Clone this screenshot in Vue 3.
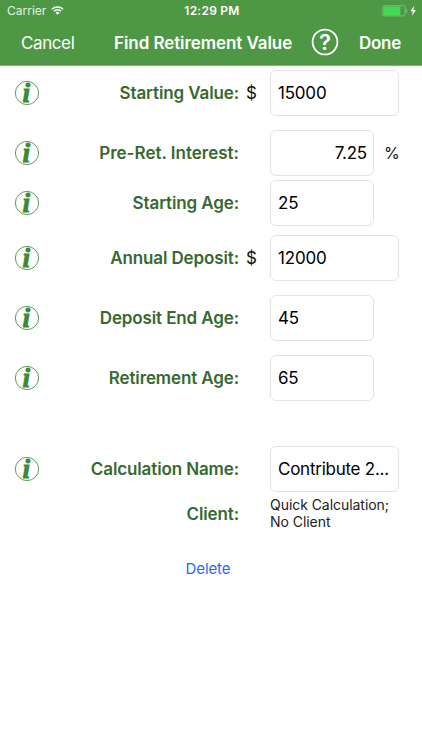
<template>
  <div class="screen">
    <header class="top-bar">
      <div class="status-bar">
        <div class="carrier">
          <span class="carrier-name">Carrier</span>
          <svg class="wifi" viewBox="0 0 13 9" width="13" height="9">
            <path d="M0.9 3.3a8 8 0 0 1 11.2 0" />
            <path d="M2.9 5.3a5.1 5.1 0 0 1 7.2 0" />
            <path class="solid" d="M6.5 8.8L4.4 6.7a3 3 0 0 1 4.2 0z" />
          </svg>
        </div>
        <span class="clock">12:29 PM</span>
        <svg class="battery" viewBox="0 0 35 12" width="35" height="12">
          <rect class="shell" x="0.9" y="0.7" width="22.2" height="10.2" rx="1.6" />
          <rect class="charge" x="1.6" y="1.4" width="16.8" height="8.8" rx="0.6" />
          <path class="cap" d="M24 4v3.8q1.3-.6 1.3-1.9T24 4z" />
          <path class="bolt" d="M32.3 0.8L28.4 6.3h2.5L29.8 10.8l4.2-5.8h-2.7z" />
        </svg>
      </div>
      <nav class="nav-bar">
        <button class="nav-btn cancel">Cancel</button>
        <h1 class="title">Find Retirement Value</h1>
        <button class="help" aria-label="Help">
          <svg viewBox="0 0 28 28" width="28" height="28">
            <circle cx="14" cy="14" r="12.4" />
            <text x="14" y="22" text-anchor="middle">?</text>
          </svg>
        </button>
        <button class="nav-btn done">Done</button>
      </nav>
    </header>

    <main class="form">
      <div v-for="row in rows" :key="row.key" class="row" :class="row.key">
        <button class="info" aria-label="Info">
          <svg viewBox="0 0 26 26" width="26" height="26">
            <circle cx="13" cy="13" r="11.6" />
            <text x="12.4" y="21.8" text-anchor="middle">i</text>
          </svg>
        </button>
        <label class="label" :for="row.key">{{ row.label }}</label>
        <span class="prefix">{{ row.prefix }}</span>
        <div :id="row.key" class="field" :class="{ wide: row.wide, right: row.suffix }">{{ row.value }}</div>
        <span v-if="row.suffix" class="suffix">{{ row.suffix }}</span>
      </div>

      <div class="client-row">
        <span class="label client-label">Client:</span>
        <p class="client-value">Quick Calculation;<br />No Client</p>
      </div>

      <button class="delete">Delete</button>
    </main>
  </div>
</template>

<script setup>
import { ref } from 'vue'

const rows = ref([
  { key: 'starting-value', label: 'Starting Value:', prefix: '$', value: '15000', wide: true },
  { key: 'interest', label: 'Pre-Ret. Interest:', value: '7.25', suffix: '%' },
  { key: 'starting-age', label: 'Starting Age:', value: '25' },
  { key: 'deposit', label: 'Annual Deposit:', prefix: '$', value: '12000', wide: true },
  { key: 'end-age', label: 'Deposit End Age:', value: '45' },
  { key: 'retirement-age', label: 'Retirement Age:', value: '65' },
  { key: 'calc-name', label: 'Calculation Name:', value: 'Contribute 2...', wide: true }
])
</script>

<style>
body {
  margin: 0;
  background: #fff;
}
</style>

<style scoped>
.screen {
  width: 422px;
  height: 750px;
  overflow: hidden;
  background: #fff;
  color: #111;
  font-family: Inter, "Liberation Sans", sans-serif;
}

button {
  padding: 0;
  border: none;
  background: none;
  color: inherit;
  font: inherit;
}

.top-bar {
  box-sizing: border-box;
  height: 66px;
  background: #4e9845;
  border-bottom: 1px solid #80b57a;
  color: #fff;
}

.status-bar {
  display: grid;
  grid-template-columns: 1fr auto 1fr;
  align-items: center;
  height: 21px;
  padding: 0 5px 0 7px;
  font-size: 12px;
}

.carrier {
  display: flex;
  align-items: center;
  gap: 5px;
  color: #e4f2e1;
}

.carrier-name {
  letter-spacing: 0;
}

.wifi path {
  fill: none;
  stroke: #fff;
  stroke-width: 1.4;
}

.wifi .solid {
  fill: #fff;
  stroke: none;
}

.clock {
  font-weight: 600;
  letter-spacing: 0.25px;
}

.battery {
  justify-self: end;
}

.shell {
  fill: none;
  stroke: #8cc084;
  stroke-width: 0.8;
}

.charge {
  fill: #43d854;
}

.cap {
  fill: #8cc084;
}

.bolt {
  fill: #fff;
}

.nav-bar {
  display: flex;
  align-items: center;
  height: 43px;
  padding-left: 21px;
  font-size: 17px;
  white-space: nowrap;
}

.cancel {
  width: 93px;
  text-align: left;
  letter-spacing: -0.4px;
}

.title {
  width: 197px;
  margin: 0;
  font-size: 17px;
  font-weight: 600;
  letter-spacing: -0.07px;
}

.help {
  width: 48px;
  height: 30px;
  text-align: left;
}

.help svg,
.info svg {
  display: block;
  overflow: visible;
}

.help svg {
  margin-top: -1px;
}

.help circle {
  fill: none;
  stroke: #fff;
  stroke-width: 1.8;
}

.help text {
  fill: #fff;
  font-size: 22px;
  font-weight: 600;
}

.done {
  font-weight: 600;
  letter-spacing: -0.3px;
}

.form {
  display: flex;
  flex-direction: column;
  padding-top: 4px;
}

.row {
  display: flex;
  align-items: center;
  height: 46px;
  margin-bottom: 14px;
  padding-left: 14px;
}

.interest {
  margin-bottom: 4px;
}

.starting-age {
  margin-bottom: 9px;
}

.retirement-age {
  margin-bottom: 45px;
}

.calc-name {
  margin-bottom: 0;
}

.info {
  width: 26px;
  height: 26px;
}

.info circle {
  fill: none;
  stroke: #4a8f42;
  stroke-width: 0.9;
}

.info text {
  fill: #3a8a34;
  stroke: #3a8a34;
  stroke-width: 0.9;
  font-family: "Liberation Serif", serif;
  font-size: 27.5px;
  font-style: italic;
  font-weight: 700;
}

.label {
  width: 199px;
  color: #37692f;
  font-size: 17px;
  font-weight: 600;
  letter-spacing: -0.12px;
  text-align: right;
  white-space: nowrap;
}

.interest .label {
  letter-spacing: 0;
}

.prefix {
  width: 24px;
  padding-left: 7px;
  font-size: 17px;
}

.field {
  box-sizing: border-box;
  width: 104px;
  height: 46px;
  padding: 0 7px;
  border: 1px solid #e4e4e4;
  border-radius: 6px;
  color: #000;
  font-size: 17px;
  line-height: 44px;
  letter-spacing: -0.2px;
  white-space: nowrap;
}

.field.wide {
  width: 129px;
}

.field.right {
  padding-right: 6px;
  text-align: right;
}

.calc-name .field {
  letter-spacing: -0.25px;
}

.suffix {
  margin-left: 10px;
  font-size: 16px;
}

.client-row {
  display: flex;
  height: 44px;
  padding-left: 40px;
}

.client-label {
  line-height: 44px;
}

.client-value {
  margin: 4px 0 0 31px;
  color: #222;
  font-size: 14px;
  line-height: 17px;
  letter-spacing: -0.05px;
}

.delete {
  align-self: center;
  height: 24px;
  margin: 21px 6px 0 0;
  color: #1b6df0;
  font-size: 15px;
  line-height: 24px;
  letter-spacing: -0.1px;
}
</style>
